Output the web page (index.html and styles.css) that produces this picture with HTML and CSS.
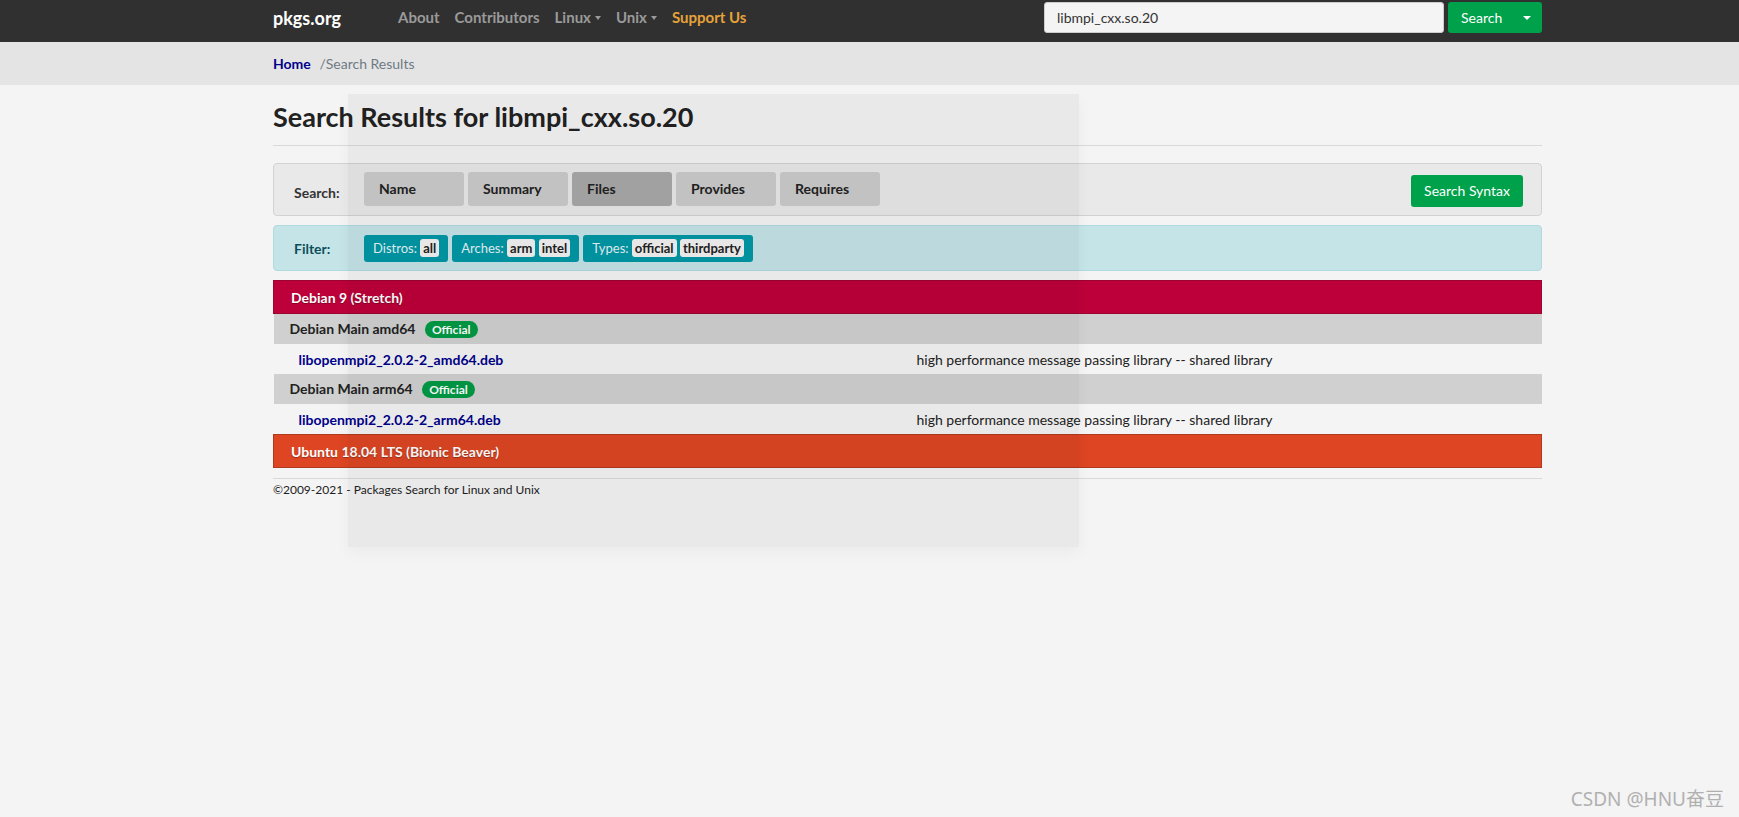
FILE: index.html
```html
<!DOCTYPE html>
<html lang="en">
<head>
    <meta charset="UTF-8">
    <meta name="viewport" content="width=device-width, initial-scale=1.0">
    <title>Search Results for libmpi_cxx.so.20 - pkgs.org</title>
    <link rel="stylesheet" href="styles.css">
</head>
<body>
    <nav class="navbar">
        <div class="container nav-inner">
            <a class="brand" href="#">pkgs.org</a>
            <ul class="nav-links">
                <li><a href="#">About</a></li>
                <li><a href="#">Contributors</a></li>
                <li><a href="#" class="dropdown">Linux</a></li>
                <li><a href="#" class="dropdown">Unix</a></li>
                <li><a href="#" class="support">Support Us</a></li>
            </ul>
            <form class="search-form">
                <input type="text" class="search-input" value="libmpi_cxx.so.20">
                <div class="search-btn">
                    <span class="search-btn-label">Search</span>
                    <span class="search-btn-caret"></span>
                </div>
            </form>
        </div>
    </nav>

    <div class="breadcrumb-bar">
        <div class="container">
            <a href="#" class="crumb-home">Home</a>
            <span class="crumb-sep">/</span><span class="crumb-current">Search Results</span>
        </div>
    </div>

    <div class="container main">
        <h1>Search Results for libmpi_cxx.so.20</h1>
        <hr>

        <div class="search-panel">
            <span class="panel-label">Search:</span>
            <div class="mode-buttons">
                <a href="#" class="mode-button">Name</a>
                <a href="#" class="mode-button">Summary</a>
                <a href="#" class="mode-button active">Files</a>
                <a href="#" class="mode-button">Provides</a>
                <a href="#" class="mode-button">Requires</a>
            </div>
            <a href="#" class="syntax-button">Search Syntax</a>
        </div>

        <div class="filter-panel">
            <span class="panel-label filter-label">Filter:</span>
            <div class="filter-pills">
                <span class="filter-pill">Distros: <b>all</b></span>
                <span class="filter-pill">Arches: <b>arm</b> <b>intel</b></span>
                <span class="filter-pill">Types: <b>official</b> <b>thirdparty</b></span>
            </div>
        </div>

        <table class="results">
            <tr class="distro debian">
                <td colspan="2">Debian 9 (Stretch)</td>
            </tr>
            <tr class="repo">
                <td colspan="2">Debian Main amd64 <span class="badge-official">Official</span></td>
            </tr>
            <tr class="package">
                <td><a href="#">libopenmpi2_2.0.2-2_amd64.deb</a></td>
                <td class="summary">high performance message passing library -- shared library</td>
            </tr>
            <tr class="repo">
                <td colspan="2">Debian Main arm64 <span class="badge-official">Official</span></td>
            </tr>
            <tr class="package">
                <td><a href="#">libopenmpi2_2.0.2-2_arm64.deb</a></td>
                <td class="summary">high performance message passing library -- shared library</td>
            </tr>
            <tr class="distro ubuntu">
                <td colspan="2">Ubuntu 18.04 LTS (Bionic Beaver)</td>
            </tr>
        </table>

        <footer class="footer">
            &copy;2009-2021 - Packages Search for Linux and Unix
        </footer>
    </div>

    <div class="dim-overlay"></div>
    <div class="watermark">CSDN @HNU奋豆</div>
</body>
</html>
```

FILE: styles.css
```css
body {
    margin: 0;
    font-family: Lato, "Liberation Sans", sans-serif;
    font-size: 14px;
    color: #222;
    background-color: #f4f4f4;
}

a {
    text-decoration: none;
}

.container {
    width: 1269px;
    margin-left: 273px;
}

/* top bar */
.navbar {
    background-color: #303030;
    height: 42px;
}

.nav-inner {
    display: flex;
    align-items: flex-start;
    height: 42px;
}

.brand {
    color: #fff;
    font-weight: bold;
    font-size: 18px;
    line-height: 37px;
    margin-right: 57px;
}

.nav-links {
    list-style: none;
    margin: 0;
    padding: 0;
    display: flex;
    gap: 15px;
    flex-grow: 1;
}

.nav-links a {
    display: block;
    color: #9a9a9a;
    font-weight: bold;
    font-size: 15px;
    line-height: 35px;
}

.nav-links a.dropdown::after {
    content: "";
    display: inline-block;
    margin-left: 4px;
    vertical-align: 3px;
    border-top: 4px solid #9a9a9a;
    border-left: 3.5px solid transparent;
    border-right: 3.5px solid transparent;
}

.nav-links a.support {
    color: #e6a23a;
}

.search-form {
    display: flex;
    gap: 4px;
    margin: 2px 0 0 0;
}

.search-input {
    width: 400px;
    height: 31px;
    box-sizing: border-box;
    border: 1px solid #ccc;
    border-radius: 3px;
    background-color: #f4f4f4;
    padding: 0 12px;
    font-family: inherit;
    font-size: 14px;
    color: #333;
}

.search-btn {
    display: flex;
    align-items: center;
    width: 94px;
    height: 31px;
    box-sizing: border-box;
    background-color: #00a14b;
    border-radius: 3px;
    color: #fff;
    font-size: 14px;
}

.search-btn-label {
    padding-left: 13px;
    flex-grow: 1;
}

.search-btn-caret {
    width: 0;
    margin-right: 11px;
    border-top: 4px solid #fff;
    border-left: 4px solid transparent;
    border-right: 4px solid transparent;
}

/* breadcrumb */
.breadcrumb-bar {
    background-color: #e4e4e4;
    height: 43px;
    display: flex;
    align-items: center;
}

.crumb-home {
    color: #00008b;
    font-weight: bold;
    font-size: 14px;
    margin-right: 5px;
}

.crumb-sep,
.crumb-current {
    color: #707a84;
    font-size: 14px;
}

/* main */
.main h1 {
    font-size: 27px;
    font-weight: bold;
    margin: 15px 0 0 0;
    line-height: 34px;
    color: #222;
}

.main hr {
    border: none;
    border-top: 1px solid #dadada;
    margin: 11px 0 17px 0;
}

.search-panel {
    display: flex;
    align-items: center;
    background-color: #e9e9e9;
    border: 1px solid #d2d2d2;
    border-radius: 4px;
    height: 53px;
    box-sizing: border-box;
    padding: 0 18px 0 20px;
}

.panel-label {
    font-weight: bold;
    color: #333;
    width: 70px;
    font-size: 14px;
    padding-top: 5px;
}

.mode-buttons {
    display: flex;
    gap: 4px;
    flex-grow: 1;
    margin-top: -1px;
}

.mode-button {
    display: block;
    width: 100px;
    height: 34px;
    line-height: 34px;
    box-sizing: border-box;
    padding-left: 15px;
    background-color: #cbcbcb;
    border-radius: 3px;
    color: #222;
    font-weight: bold;
    font-size: 14px;
}

.mode-button.active {
    background-color: #a9a9a9;
}

.syntax-button {
    background-color: #00a14b;
    color: #fff;
    border-radius: 3px;
    padding: 0 13px;
    height: 32px;
    line-height: 32px;
    font-size: 14px;
    margin-top: 3px;
}

.filter-panel {
    display: flex;
    align-items: center;
    margin-top: 9px;
    height: 46px;
    box-sizing: border-box;
    background-color: #c5e4e7;
    border: 1px solid #b0dade;
    border-radius: 4px;
    padding: 0 20px;
}

.filter-label {
    color: #0d4f5b;
    padding-top: 0;
}

.filter-pills {
    display: flex;
    gap: 4px;
}

.filter-pill {
    background-color: #0097a6;
    color: #e6f4f6;
    border-radius: 3px;
    height: 27px;
    line-height: 27px;
    padding: 0 9px;
    font-size: 13px;
}

.filter-pill b {
    background-color: #f2f2f2;
    color: #222;
    border-radius: 3px;
    padding: 1px 3px;
    font-size: 13px;
}

/* results table */
.results {
    width: 100%;
    margin-top: 9px;
    border-collapse: collapse;
    table-layout: fixed;
}

.results td {
    padding: 0;
}

.distro td {
    height: 32px;
    color: #fff;
    font-weight: bold;
    font-size: 14px;
    padding-left: 17px;
    text-shadow: 0 1px 1px rgba(0, 0, 0, 0.3);
}

.debian td {
    background-color: #bd0039;
    border: 1px solid #9c0530;
}

.ubuntu td {
    background-color: #dd4523;
    border: 1px solid #b03a1f;
}

.repo td {
    height: 30px;
    background-color: #d0d0d0;
    font-weight: bold;
    font-size: 14px;
    color: #222;
    padding-left: 16px;
}

.badge-official {
    display: inline-block;
    background-color: #009a45;
    color: #fff;
    border-radius: 10px;
    padding: 0 7px;
    margin-left: 6px;
    font-size: 12px;
    line-height: 17px;
}

.package td {
    height: 30px;
    background-color: #f4f4f4;
    padding-left: 25px;
}

.package a {
    color: #00008b;
    font-weight: bold;
    font-size: 14px;
}

.package td.summary {
    padding-left: 9px;
    font-size: 14px;
    color: #222;
}

.footer {
    border-top: 1px solid #dadada;
    margin-top: 10px;
    padding-top: 3px;
    font-size: 12px;
    color: #222;
}

/* dim layer from the screenshot */
.dim-overlay {
    position: absolute;
    left: 348px;
    top: 94px;
    width: 731px;
    height: 453px;
    background-color: rgba(0, 0, 0, 0.045);
    box-shadow: 0 6px 14px rgba(0, 0, 0, 0.04);
    pointer-events: none;
}

.watermark {
    position: absolute;
    right: 15px;
    bottom: 5px;
    color: #b0b0b0;
    font-family: "Noto Sans", "Noto Sans CJK SC", sans-serif;
    font-size: 19px;
}
```
